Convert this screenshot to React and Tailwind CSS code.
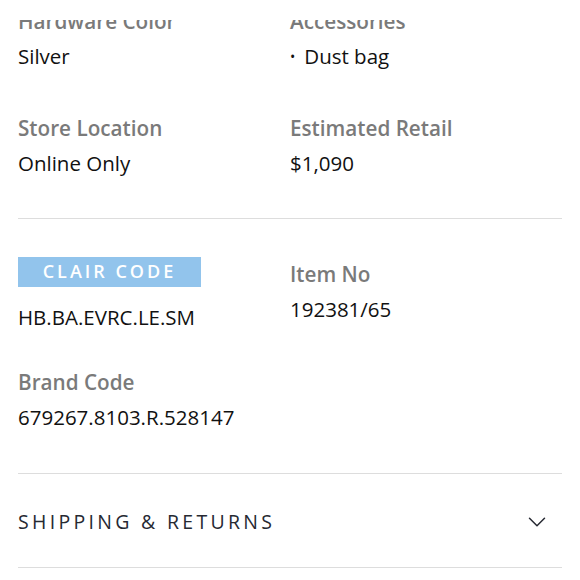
import { ChevronDown } from 'lucide-react';

function Field({ label, value }) {
  return (
    <div>
      <p className="text-[20.7px] font-semibold leading-[35px] text-[#7a7a7a]">{label}</p>
      <p className="text-[20.5px] leading-[35px] text-[#111111]">{value}</p>
    </div>
  );
}

export default function App() {
  return (
    <div className="relative h-[580px] w-[580px] overflow-hidden bg-white font-['Open_Sans',sans-serif]">
      {/* sticky header covering the scrolled content */}
      <div className="absolute inset-x-0 top-0 z-10 h-[20px] bg-white" />

      <div className="px-[18px] pt-[3.5px]">
        <div className="grid grid-cols-[272px_1fr]">
          <Field label="Hardware Color" value="Silver" />
          <Field
            label="Accessories"
            value={
              <span className="flex items-center">
                <span className="mr-[9px] text-[14px]">•</span>Dust bag
              </span>
            }
          />
        </div>

        <div className="mt-[37px] grid grid-cols-[272px_1fr]">
          <Field label="Store Location" value="Online Only" />
          <Field label="Estimated Retail" value="$1,090" />
        </div>

        <div className="mt-[37px] h-px bg-[#dddddd]" />

        <div className="mt-[38px] grid grid-cols-[272px_1fr]">
          <div>
            <div className="flex h-[30px] w-[183px] items-center justify-center bg-[#92c4ec] text-[18px] font-semibold tracking-[3px] text-white">
              CLAIR CODE
            </div>
            <p className="mt-[13.5px] text-[20.5px] leading-[35px] text-[#111111]">HB.BA.EVRC.LE.SM</p>
          </div>
          <Field label="Item No" value="192381/65" />
        </div>

        <div className="mt-[30px]">
          <Field label="Brand Code" value="679267.8103.R.528147" />
        </div>

        <div className="mt-[37.5px] h-px bg-[#dddddd]" />

        <button
          type="button"
          className="flex h-[93px] w-full items-center justify-between pt-[3px] text-left"
        >
          <span className="text-[19.5px] font-medium tracking-[3.3px] text-[#262932]">
            SHIPPING &amp; RETURNS
          </span>
          <ChevronDown className="mr-[10px] h-[30px] w-[30px] text-[#262932]" strokeWidth={1.2} />
        </button>

        <div className="h-px bg-[#dddddd]" />
      </div>
    </div>
  );
}
